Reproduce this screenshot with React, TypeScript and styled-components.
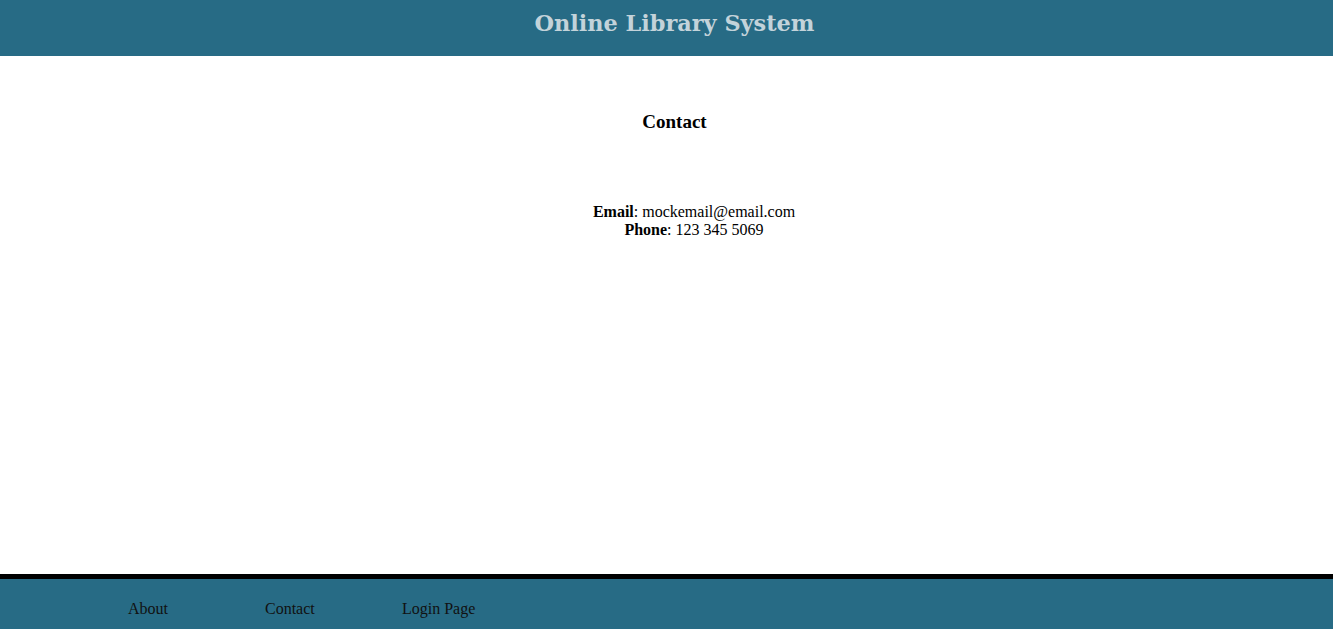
import styled, { createGlobalStyle } from 'styled-components';

const Global = createGlobalStyle`
	html, body {
		margin: 0;
		padding: 0;
		background: #fff;
		font-family: 'Liberation Serif', 'Times New Roman', serif;
	}
`;

const Page = styled.div`
	min-height: 629px;
	display: flex;
	flex-direction: column;
`;

const Header = styled.header`
	height: 56px;
	background: #276b85;
	display: flex;
	align-items: center;
	justify-content: center;
`;

const Title = styled.h1`
	margin: 0;
	font-family: 'DejaVu Serif', Georgia, serif;
	font-size: 22.4px;
	font-weight: bold;
	color: #c3d3da;
	padding-left: 16px;
	padding-bottom: 10px;
`;

const Main = styled.main`
	flex: 1;
	display: flex;
	flex-direction: column;
	align-items: center;
`;

const Heading = styled.h3`
	margin: 54px 0 0 16px;
	font-size: 19px;
	font-weight: bold;
	line-height: 24px;
`;

const Details = styled.div`
	margin: 69px 0 0 55px;
	text-align: center;
	font-size: 16px;
	line-height: 18px;
`;

const Footer = styled.footer`
	height: 50px;
	border-top: 5px solid #000;
	background: #276b85;
	display: flex;
	align-items: center;
	padding-left: 128px;
`;

const FooterLink = styled.a`
	width: 137px;
	color: #111;
	font-size: 16px;
	text-decoration: none;
	padding-top: 10px;
`;

export default function App() {
	return (
		<Page>
			<Global />
			<Header>
				<Title>Online Library System</Title>
			</Header>
			<Main>
				<Heading>Contact</Heading>
				<Details>
					<b>Email</b>: mockemail@email.com
					<br />
					<b>Phone</b>: 123 345 5069
				</Details>
			</Main>
			<Footer>
				<FooterLink href="#">About</FooterLink>
				<FooterLink href="#">Contact</FooterLink>
				<FooterLink href="#">Login Page</FooterLink>
			</Footer>
		</Page>
	);
}
